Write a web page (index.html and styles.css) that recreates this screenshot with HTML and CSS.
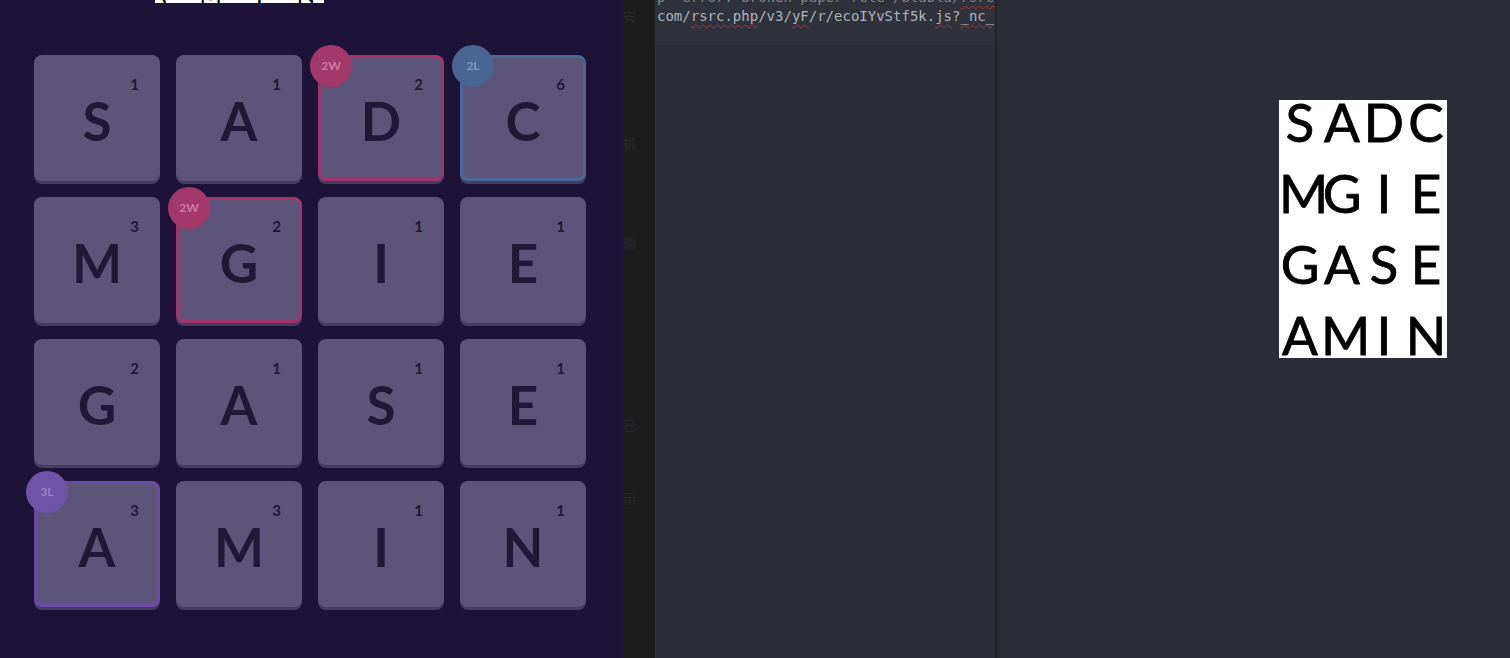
FILE: index.html
```html
<!DOCTYPE html>
<html lang="zh">
<head>
<meta charset="utf-8">
<title>Board</title>
<link rel="stylesheet" href="styles.css">
</head>
<body>
<div class="screen">
  <section class="game">
    <div class="strip"><span>A M I N</span></div>
    <div class="board">
      <div class="tile"><span class="ltr">S</span><span class="pts">1</span></div>
      <div class="tile"><span class="ltr">A</span><span class="pts">1</span></div>
      <div class="tile tw"><span class="badge">2W</span><span class="ltr">D</span><span class="pts">2</span></div>
      <div class="tile dl"><span class="badge">2L</span><span class="ltr">C</span><span class="pts">6</span></div>

      <div class="tile"><span class="ltr">M</span><span class="pts">3</span></div>
      <div class="tile tw"><span class="badge">2W</span><span class="ltr">G</span><span class="pts">2</span></div>
      <div class="tile"><span class="ltr">I</span><span class="pts">1</span></div>
      <div class="tile"><span class="ltr">E</span><span class="pts">1</span></div>

      <div class="tile"><span class="ltr">G</span><span class="pts">2</span></div>
      <div class="tile"><span class="ltr">A</span><span class="pts">1</span></div>
      <div class="tile"><span class="ltr">S</span><span class="pts">1</span></div>
      <div class="tile"><span class="ltr">E</span><span class="pts">1</span></div>

      <div class="tile tl"><span class="badge">3L</span><span class="ltr">A</span><span class="pts">3</span></div>
      <div class="tile"><span class="ltr">M</span><span class="pts">3</span></div>
      <div class="tile"><span class="ltr">I</span><span class="pts">1</span></div>
      <div class="tile"><span class="ltr">N</span><span class="pts">1</span></div>
    </div>
  </section>

  <aside class="gutter">
    <span class="g1">安</span>
    <span class="g2">机</span>
    <span class="g3">确</span>
    <span class="g4">已</span>
    <span class="g5">示</span>
  </aside>

  <section class="editor">
    <div class="lines">
      <div class="line first">p= error: broken paper rele /blabla/<span class="sq">rsrc.</span></div>
      <div class="line">com/<span class="sq">rsrc.php</span>/v3/<span class="sq">yF</span>/r/ecoIYvStf5k.<span class="sq">js</span>?<span class="sq">_nc_</span>;</div>
    </div>
  </section>

  <div class="divider"></div>

  <section class="viewer">
    <div class="card">
      <div class="grid">
        <span>S</span><span>A</span><span>D</span><span>C</span>
        <span>M</span><span>G</span><span>I</span><span>E</span>
        <span>G</span><span>A</span><span>S</span><span>E</span>
        <span>A</span><span>M</span><span>I</span><span>N</span>
      </div>
    </div>
  </section>
</div>
</body>
</html>
```

FILE: styles.css
```css
* { box-sizing: border-box; }

html, body {
  margin: 0;
  padding: 0;
  width: 1510px;
  height: 658px;
  overflow: hidden;
  background: #2a2d35;
  font-family: "Lato", "Noto Sans", sans-serif;
}

.screen {
  display: flex;
  width: 1510px;
  height: 658px;
}

/* ---------- game panel ---------- */
.game {
  width: 623px;
  height: 658px;
  flex: none;
  background: #1d1238;
  display: flex;
  flex-direction: column;
}

.strip {
  margin-left: 155px;
  width: 169px;
  height: 3px;
  flex: none;
  background: #ffffff;
  overflow: hidden;
  display: flex;
  align-items: flex-start;
  justify-content: center;
}

.strip span {
  font-size: 24px;
  line-height: 24px;
  font-weight: 400;
  color: #000;
  margin-top: -18px;
  letter-spacing: 14px;
  white-space: nowrap;
}

.board {
  margin: 52px 0 0 34px;
  display: grid;
  grid-template-columns: repeat(4, 126px);
  grid-auto-rows: 126px;
  gap: 16px;
}

.tile {
  position: relative;
  background: #5d5579;
  border-radius: 8px;
  box-shadow: 0 3px 0 #463d62;
  display: flex;
  align-items: center;
  justify-content: center;
  padding-top: 4px;
}

.tile.tw { border: 3px solid #a3346b; }
.tile.dl { border: 3px solid #4a6898; }
.tile.tl { border: 3px solid #6a4ca8; }

.ltr {
  font-size: 53px;
  font-weight: 700;
  color: #201837;
  line-height: 1;
}

.pts {
  position: absolute;
  top: 22px;
  right: 21px;
  font-size: 15px;
  font-weight: 700;
  color: #201837;
  line-height: 1;
}

.tw .pts, .dl .pts, .tl .pts { top: 19px; right: 18px; }

.badge {
  position: absolute;
  top: -13px;
  left: -11px;
  width: 42px;
  height: 42px;
  border-radius: 50%;
  display: flex;
  align-items: center;
  justify-content: center;
  font-size: 12px;
  font-weight: 700;
  line-height: 1;
}

.tw .badge { background: #a3386b; color: #d27aa2; }
.dl .badge { background: #4a6592; color: #8298c0; }
.tl .badge { background: #6d54a6; color: #9884c6; }

/* ---------- gutter ---------- */
.gutter {
  width: 32px;
  flex: none;
  height: 658px;
  background: #1c1c1d;
  position: relative;
  font-family: "Noto Sans CJK SC", sans-serif;
  font-size: 13px;
  color: #2a2a2b;
}

.gutter span { position: absolute; left: 0; }
.gutter .g1 { top: 6px; }
.gutter .g2 { top: 133px; }
.gutter .g3 { top: 233px; }
.gutter .g4 { top: 415px; }
.gutter .g5 { top: 488px; }

/* ---------- editor ---------- */
.editor {
  width: 340px;
  flex: none;
  height: 658px;
  background: #2b2e36;
}

.lines {
  height: 45px;
  background: #2f323a;
  padding-left: 2px;
  overflow: hidden;
}

.line {
  font-family: "DejaVu Sans Mono", monospace;
  font-size: 14px;
  line-height: 19px;
  height: 19px;
  color: #aeb2ba;
  white-space: nowrap;
}

.line.first {
  margin-top: -12px;
  color: #80848c;
}

.sq {
  text-decoration: underline wavy #b0352f;
  text-decoration-thickness: 1px;
  text-underline-offset: 3px;
}

.divider {
  width: 2px;
  flex: none;
  height: 658px;
  background: #23252b;
}

/* ---------- viewer ---------- */
.viewer {
  flex: 1;
  height: 658px;
  background: #2a2d35;
  padding: 100px 0 0 282px;
}

.card {
  width: 168px;
  height: 258px;
  background: #ffffff;
  overflow: hidden;
}

.grid {
  margin-top: -14px;
  display: grid;
  grid-template-columns: repeat(4, 42px);
  grid-auto-rows: 71px;
  font-family: "Lato", sans-serif;
  font-size: 53px;
  font-weight: 400;
  line-height: 71px;
  color: #000;
  text-align: center;
  -webkit-text-stroke: 0.8px #000;
}
```
